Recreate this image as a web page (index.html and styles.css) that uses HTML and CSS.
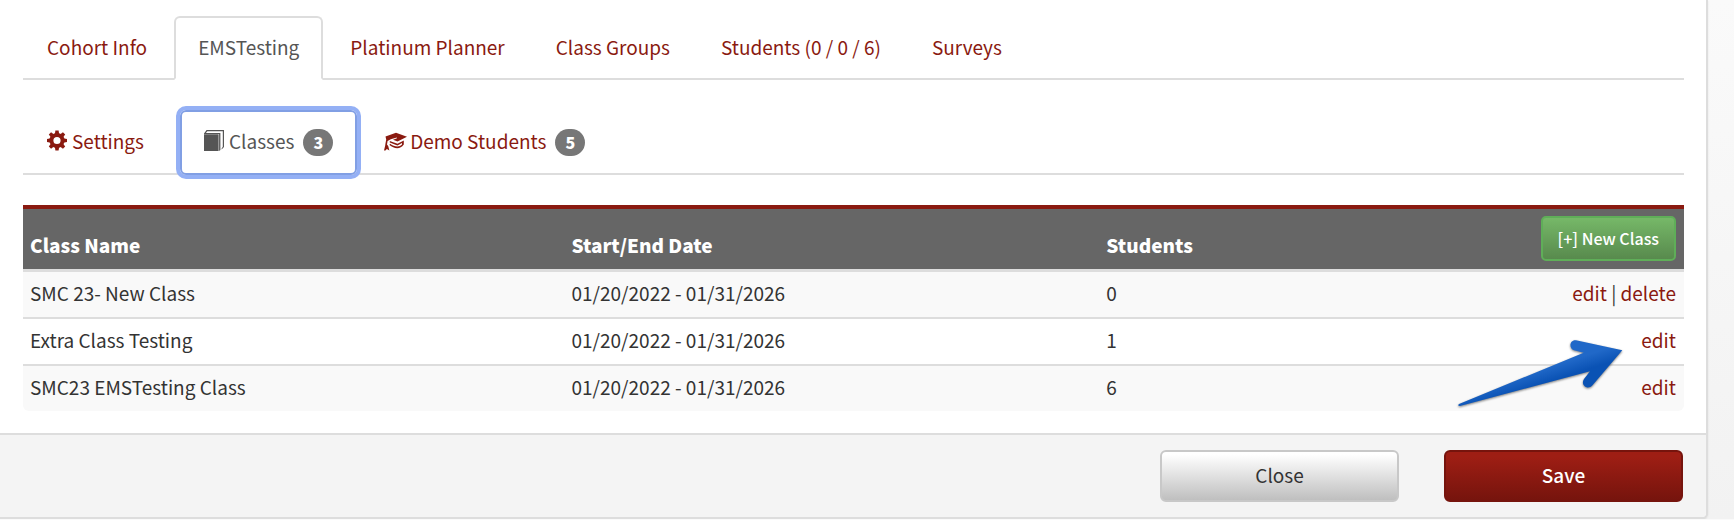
FILE: index.html
```html
<!DOCTYPE html>
<html lang="en">
<head>
  <meta charset="UTF-8" />
  <meta name="viewport" content="width=device-width, initial-scale=1.0"/>
  <title>Cohort - Classes</title>
  <link rel="stylesheet" href="styles.css">
</head>
<body>
  <div class="panel">
    <div class="panel-body">
      <nav class="tabs">
        <a class="tab" href="#">Cohort Info</a>
        <a class="tab active" href="#">EMSTesting</a>
        <a class="tab" href="#">Platinum Planner</a>
        <a class="tab" href="#">Class Groups</a>
        <a class="tab" href="#">Students (0 / 0 / 6)</a>
        <a class="tab" href="#">Surveys</a>
      </nav>

      <nav class="tabs sub-tabs">
        <a class="tab" href="#">
          <svg class="icon" viewBox="0 0 20 20">
            <circle cx="10" cy="10" r="5.6" fill="none" stroke="currentColor" stroke-width="4"/>
            <g fill="currentColor">
              <path id="tooth" d="M8.4 0h3.2l.6 4H7.8z"/>
              <use href="#tooth" transform="rotate(45 10 10)"/>
              <use href="#tooth" transform="rotate(90 10 10)"/>
              <use href="#tooth" transform="rotate(135 10 10)"/>
              <use href="#tooth" transform="rotate(180 10 10)"/>
              <use href="#tooth" transform="rotate(225 10 10)"/>
              <use href="#tooth" transform="rotate(270 10 10)"/>
              <use href="#tooth" transform="rotate(315 10 10)"/>
            </g>
          </svg>
          <span class="label">Settings</span>
          <span class="badge"></span>
        </a>
        <a class="tab active focused" href="#">
          <svg class="icon" viewBox="0 0 20 21">
            <path fill="currentColor" d="M0 4.300h14.600V21H0zM0 3.400 2.600 0H20v17l-2.400 2.400V18.500l1.200-1.700V1.300H3.300L1.900 3h14.500v17l-1.300 1V3.900H0z"/>
          </svg>
          <span class="label">Classes</span>
          <span class="badge">3</span>
        </a>
        <a class="tab" href="#">
          <svg class="icon icon-wide" viewBox="0 0 23 20">
            <path fill="currentColor" d="M12 2.200 23 6.200 13.500 10.900 9 9.200l4-1.500-.3-.8L6.800 8.800 3.600 10.400 3 14l1.200 1.600L5.400 20l-2.500-1.500L1.400 20H0l1.200-5L1.400 13.600 2.200 9 1.500 6z"/>
            <path fill="currentColor" d="M5.800 10.400 13.500 13.200 19.800 10v4c-2 2.600-4 3.800-6.600 3.800-2.600 0-5.400-1.200-7.800-3.200l.7-1.300c2.400 1.700 4.800 2.600 7.200 2.600 2 0 3.500-.8 4.700-2v-1.400l-4.600 2.400-7.600-3z"/>
          </svg>
          <span class="label">Demo Students</span>
          <span class="badge">5</span>
        </a>
      </nav>

      <div class="table-wrap">
        <table class="classes">
          <thead>
            <tr>
              <th class="col-name">Class Name</th>
              <th class="col-date">Start/End Date</th>
              <th>Students</th>
              <th class="actions"><button class="btn-new" type="button">[+] New Class</button></th>
            </tr>
          </thead>
          <tbody>
            <tr>
              <td>SMC 23- New Class</td>
              <td>01/20/2022 - 01/31/2026</td>
              <td>0</td>
              <td class="actions"><a href="#">edit</a> | <a href="#">delete</a></td>
            </tr>
            <tr>
              <td>Extra Class Testing</td>
              <td>01/20/2022 - 01/31/2026</td>
              <td>1</td>
              <td class="actions"><a href="#">edit</a></td>
            </tr>
            <tr>
              <td>SMC23 EMSTesting Class</td>
              <td>01/20/2022 - 01/31/2026</td>
              <td>6</td>
              <td class="actions"><a href="#">edit</a></td>
            </tr>
          </tbody>
        </table>

        <!-- arrow pointing at the edit link -->
        <svg class="arrow" viewBox="0 0 168 70">
          <defs>
            <linearGradient id="arrowFill" gradientUnits="userSpaceOnUse" x1="84" y1="26" x2="91" y2="48">
              <stop offset="0.2" stop-color="#2068c8"/>
              <stop offset="0.8" stop-color="#0a52b4"/>
            </linearGradient>
          </defs>
          <path fill="url(#arrowFill)" d="M3 65 127.700 13.700 118 11.200C112.500 9.500 113.500 .5 120 1.300L166.300 11.300 136.500 46.300C132 51.500 124 46.500 128 40L134 32.300 4 67Q1 67 3 65z"/>
        </svg>
      </div>
    </div>

    <div class="panel-footer">
      <button class="btn btn-close" type="button">Close</button>
      <button class="btn btn-save" type="button">Save</button>
    </div>
  </div>
</body>
</html>
```
FILE: styles.css
```css
* {
  box-sizing: border-box;
}

body {
  margin: 0;
  background: linear-gradient(#fafafa, #f2f2f2);
  color: #333;
  font-family: "Noto Sans CJK SC", "Open Sans", sans-serif;
  font-size: 19px;
  line-height: 30px;
}

a {
  color: #8a1a10;
  text-decoration: none;
}

.panel {
  margin-right: 26px;
  background-color: #fff;
  border-right: 2px solid #ddd;
  border-bottom: 2px solid #ddd;
  border-bottom-right-radius: 6px;
  box-shadow: 0 1px 2px rgba(0, 0, 0, 0.1);
}

.panel-body {
  padding: 16px 22px 22px 23px;
}

/* Tabs */
.tabs {
  display: flex;
  gap: 3px;
  border-bottom: 2px solid #ddd;
}

.sub-tabs {
  margin-top: 30px;
}

.tab {
  display: flex;
  align-items: center;
  margin-bottom: -2px;
  padding: 14px 22px 16px;
  border: 2px solid transparent;
  border-radius: 6px 6px 0 0;
}

.sub-tabs .tab {
  padding-bottom: 17px;
}

.tab.active {
  color: #555;
  background-color: #fff;
  border-color: #ddd;
  border-bottom-color: #fff;
}

.tab.focused {
  border-color: #819fe4;
  border-radius: 6px;
  outline: 4px solid #94b0f5;
}

.icon {
  width: 20px;
  height: 21px;
  margin: 0 5px 2px 0;
}

.icon-wide {
  width: 23px;
  margin-right: 3px;
}

.badge {
  margin: 3px 0 0 9px;
  padding: 0 10px;
  border-radius: 14px;
  background-color: #777;
  color: #fff;
  font-size: 16px;
  font-weight: 900;
  line-height: 27px;
}

.badge:empty {
  padding: 0;
}

/* Class list */
.table-wrap {
  position: relative;
  margin-top: 30px;
}

.classes {
  width: 100%;
  table-layout: fixed;
  border-collapse: separate;
  border-spacing: 0;
  border-top: 4px solid #8a1a10;
  border-radius: 0 0 6px 6px;
  overflow: hidden;
}

.classes th {
  padding: 7px 7px 9px;
  background-color: #666;
  border-bottom: 3px solid #ddd;
  color: #fff;
  font-weight: 900;
  text-align: left;
  vertical-align: bottom;
}

.classes td {
  padding: 6px 7px 9px;
}

.classes tr + tr td {
  border-top: 2px solid #ddd;
}

.classes tbody tr:nth-child(odd) {
  background-color: #f9f9f9;
}

.col-name {
  width: 32.6%;
}

.col-date {
  width: 32.2%;
}

.classes .actions {
  padding-right: 8px;
  text-align: right;
}

.classes th.actions {
  padding-bottom: 8px;
}

.btn-new {
  display: block;
  margin-left: auto;
  padding: 6px 15px;
  border: 2px solid #5fae58;
  border-radius: 5px;
  background: linear-gradient(#76b868, #588a4d);
  color: #fff;
  font: 500 16px/29px "Noto Sans CJK SC", "Open Sans", sans-serif;
}

.arrow {
  position: absolute;
  top: 134px;
  right: 60px;
  width: 168px;
  height: 70px;
  filter: drop-shadow(0 1px 1px rgba(0, 0, 0, 0.5));
  pointer-events: none;
}

/* Footer */
.panel-footer {
  display: flex;
  justify-content: flex-end;
  gap: 45px;
  padding: 15px 23px;
  background-color: #f4f4f4;
  border-top: 2px solid #ddd;
  border-bottom-right-radius: 4px;
}

.btn {
  width: 239px;
  padding: 8px 16px 10px;
  border: 2px solid #c8c8c8;
  border-radius: 6px;
  font: 19px/30px "Noto Sans CJK SC", "Open Sans", sans-serif;
}

.btn-close {
  background: linear-gradient(#fff 5%, #bfbfbf);
  color: #333;
}

.btn-save {
  border-color: #76140d;
  background: linear-gradient(#9e1e14 10%, #76140d);
  color: #fff;
  font-weight: 500;
}
```
